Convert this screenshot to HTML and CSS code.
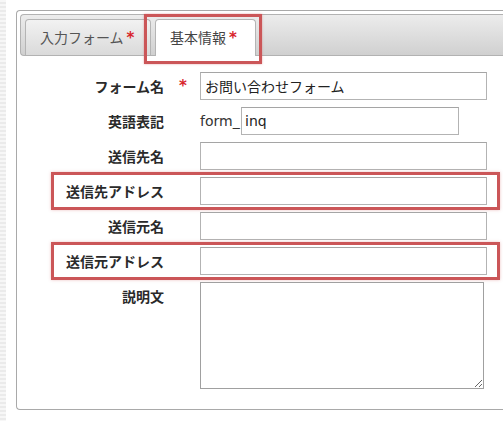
FILE: index.html
```html
<!DOCTYPE html>
<html lang="ja">
<head>
<meta charset="utf-8">
<title>基本情報</title>
<link rel="stylesheet" href="styles.css">
</head>
<body>
<div class="page">
  <div class="stripe"></div>
  <div class="panel">
    <div class="tabbar">
      <div class="tab tab-first">入力フォーム<span class="req">*</span></div>
      <div class="tab tab-active">基本情報<span class="req">*</span></div>
    </div>
    <div class="form">
      <div class="row">
        <div class="label">フォーム名</div>
        <div class="mark"><span class="req big">*</span></div>
        <input class="field" type="text" value="お問い合わせフォーム">
      </div>
      <div class="row">
        <div class="label">英語表記</div>
        <div class="mark"></div>
        <span class="prefix">form_</span><input class="field short" type="text" value="inq">
      </div>
      <div class="row">
        <div class="label">送信先名</div>
        <div class="mark"></div>
        <input class="field" type="text" value="">
      </div>
      <div class="row marked">
        <div class="label">送信先アドレス</div>
        <div class="mark"></div>
        <input class="field" type="text" value="">
      </div>
      <div class="row">
        <div class="label">送信元名</div>
        <div class="mark"></div>
        <input class="field" type="text" value="">
      </div>
      <div class="row marked">
        <div class="label">送信元アドレス</div>
        <div class="mark"></div>
        <input class="field" type="text" value="">
      </div>
      <div class="row row-top">
        <div class="label">説明文</div>
        <div class="mark"></div>
        <textarea class="area"></textarea>
      </div>
    </div>
  </div>
</div>
</body>
</html>
```
FILE: styles.css
```css
html, body {
  margin: 0;
  padding: 0;
  overflow: hidden;
  background: #ffffff;
}
body {
  font-family: "DejaVu Sans", "Noto Sans CJK JP", sans-serif;
  font-size: 14px;
  color: #333;
}
.page {
  display: flex;
  width: 503px;
  height: 421px;
}
.stripe {
  width: 6px;
  flex: none;
  height: 421px;
  background: repeating-linear-gradient(to bottom, #f7f7f7 0 2px, #ebebeb 2px 4px);
}
.panel {
  flex: none;
  margin: 10px 0 0 10px;
  width: 487px;
  height: 400px;
  box-sizing: border-box;
  border: 1px solid #a9a9a9;
  border-right: none;
  border-radius: 4px 0 0 4px;
  padding: 3px 0 3px 3px;
  background: #fff;
}
.tabbar {
  display: flex;
  align-items: flex-start;
  gap: 4px;
  height: 42px;
  box-sizing: border-box;
  border: 1px solid #b2b2b2;
  border-right: none;
  border-radius: 4px 0 0 4px;
  padding: 4px 0 0 4px;
  background: linear-gradient(to bottom, #ececec, #d0d0d0);
}
.tab {
  box-sizing: border-box;
  height: 36px;
  padding-left: 14px;
  border: 1px solid #b4b4b4;
  border-bottom: none;
  border-radius: 4px 4px 0 0;
  line-height: 34px;
  color: #555;
  font-family: "Noto Sans CJK JP", sans-serif;
  font-size: 14px;
  white-space: nowrap;
}
.tab-first {
  width: 126px;
  background: linear-gradient(to bottom, #f2f2f2, #dadada);
}
.tab-active {
  position: relative;
  width: 101px;
  height: 37px;
  margin-bottom: -1px;
  background: #fff;
  color: #444;
}
.tab-active::after {
  content: "";
  position: absolute;
  left: -12px;
  top: -6px;
  right: -7px;
  bottom: -8px;
  border: 3px solid #cb5658;
  box-shadow: 0 0 2px rgba(203, 86, 88, 0.5);
  pointer-events: none;
}
.req {
  color: #d8252b;
  margin-left: 3px;
  font-family: "DejaVu Sans", sans-serif;
  font-weight: bold;
  font-size: 15px;
}
.req.big {
  margin-left: 0;
  font-size: 15px;
}
.form {
  display: flex;
  flex-direction: column;
  gap: 3px;
  margin: 14px 0 0 34px;
}
.row {
  display: flex;
  align-items: center;
  width: 443px;
  height: 32px;
}
.row.marked {
  outline: 3px solid #cb5658;
  box-shadow: 0 0 3px 3px rgba(203, 86, 88, 0.35);
}
.label {
  width: 110px;
  flex: none;
  text-align: right;
  font-family: "Noto Sans CJK JP", sans-serif;
  font-weight: bold;
  font-size: 14px;
  color: #2a2a2a;
}
.mark {
  width: 36px;
  flex: none;
  text-align: center;
  padding-left: 2px;
  box-sizing: border-box;
}
.field {
  box-sizing: border-box;
  width: 287px;
  height: 28px;
  margin: 0;
  padding: 0 4px;
  border: 1px solid #b3b3b3;
  border-top-color: #a5a5a5;
  background: #fff;
  font-family: "Noto Sans CJK JP", sans-serif;
  font-size: 14px;
  color: #222;
  outline: none;
}
.prefix {
  width: 41px;
  flex: none;
  font-size: 14px;
  color: #333;
}
.field.short {
  width: 218px;
  padding-left: 3px;
  font-family: "DejaVu Sans", sans-serif;
}
.row-top {
  align-items: flex-start;
  height: 109px;
}
.row-top .label {
  padding-top: 6px;
  line-height: 20px;
}
.area {
  box-sizing: border-box;
  width: 284px;
  height: 107px;
  margin: 2px 0 0;
  border: 1px solid #a0a0a0;
  background: #fff;
  resize: both;
  outline: none;
}
```
